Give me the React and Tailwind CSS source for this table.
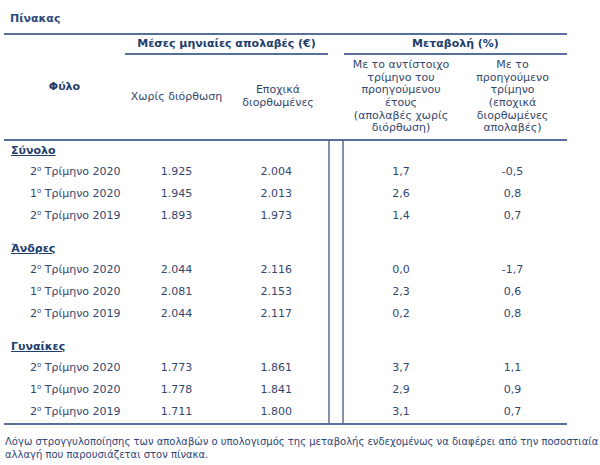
import React from "react";

const sections = [
  {
    name: "Σύνολο",
    rows: [
      ["2", "2020", "1.925", "2.004", "1,7", "-0,5"],
      ["1", "2020", "1.945", "2.013", "2,6", "0,8"],
      ["2", "2019", "1.893", "1.973", "1,4", "0,7"],
    ],
  },
  {
    name: "Άνδρες",
    rows: [
      ["2", "2020", "2.044", "2.116", "0,0", "-1,7"],
      ["1", "2020", "2.081", "2.153", "2,3", "0,6"],
      ["2", "2019", "2.044", "2.117", "0,2", "0,8"],
    ],
  },
  {
    name: "Γυναίκες",
    rows: [
      ["2", "2020", "1.773", "1.861", "3,7", "1,1"],
      ["1", "2020", "1.778", "1.841", "2,9", "0,9"],
      ["2", "2019", "1.711", "1.800", "3,1", "0,7"],
    ],
  },
];

const cols = "grid grid-cols-[121px_103px_100px_16px_114px_109px]";

const Spacer = () => <div className="h-full border-x-2 border-[#8392aa]" />;

const Row = ({ r }) => (
  <div className={`${cols} h-[22px] items-center text-[#34476e]`}>
    <div className="pl-[26px] whitespace-nowrap">
      {r[0]}
      <span className="text-[7px] relative -top-[4px]">ο</span> Τρίμηνο {r[1]}
    </div>
    <div className="text-center">{r[2]}</div>
    <div className="text-right pr-[36px]">{r[3]}</div>
    <Spacer />
    <div className="text-center">{r[4]}</div>
    <div className="text-center">{r[5]}</div>
  </div>
);

export default function App() {
  return (
    <div className="w-[600px] h-[465px] bg-white font-['DejaVu_Sans',Verdana,sans-serif] text-[11px] text-[#2a4170]">
      <div className="h-[33px] flex items-center pl-[10px] pt-[6px] font-bold text-[#2b4a7c]">Πίνακας</div>
      <div className="ml-[4px] w-[563px]">
        <div className="h-[2px] bg-[#56709a]" />
        {/* header */}
        <div className="flex">
          <div className="w-[121px] flex items-center justify-center font-bold text-[#223d6c]">Φύλο</div>
          <div className="flex flex-col">
            <div className="flex">
              <div className="w-[203px] h-[20px] flex items-center justify-center font-bold text-[#223d6c] border-b-2 border-[#56709a]">
                Μέσες μηνιαίες απολαβές (€)
              </div>
              <div className="w-[16px]" />
              <div className="w-[223px] h-[20px] flex items-center justify-center font-bold text-[#223d6c] border-b-2 border-[#56709a]">
                Μεταβολή (%)
              </div>
            </div>
            <div className="flex h-[84px] text-[#34476e] text-center leading-[12.6px]">
              <div className="w-[103px] flex items-center justify-center">Χωρίς διόρθωση</div>
              <div className="w-[100px] flex items-center justify-center">
                Εποχικά
                <br />
                διορθωμένες
              </div>
              <div className="w-[16px]" />
              <div className="w-[114px] flex items-center justify-center whitespace-nowrap">
                Με το αντίστοιχο
                <br />
                τρίμηνο του
                <br />
                προηγούμενου
                <br />
                έτους
                <br />
                (απολαβές χωρίς
                <br />
                διόρθωση)
              </div>
              <div className="w-[109px] flex items-center justify-center whitespace-nowrap">
                Με το
                <br />
                προηγούμενο
                <br />
                τρίμηνο
                <br />
                (εποχικά
                <br />
                διορθωμένες
                <br />
                απολαβές)
              </div>
            </div>
          </div>
        </div>
        <div className="h-[2px] bg-[#56709a]" />
        {/* body */}
        {sections.map((s, i) => (
          <div key={s.name}>
            {i > 0 && (
              <div className={`${cols} h-[12px]`}>
                <div />
                <div />
                <div />
                <Spacer />
              </div>
            )}
            <div className={`${cols} h-[20px] items-center`}>
              <div className="pl-[7px] font-bold underline text-[#223d6c]">{s.name}</div>
              <div />
              <div />
              <Spacer />
            </div>
            {s.rows.map((r, j) => (
              <Row key={j} r={r} />
            ))}
          </div>
        ))}
        <div className="h-[2px] bg-[#56709a]" />
      </div>
      <div className="pl-[5px] pt-[10px] text-[10px] leading-[13px] text-[#2c4577]">
        Λόγω στρογγυλοποίησης των απολαβών ο υπολογισμός της μεταβολής ενδεχομένως να διαφέρει από την ποσοστιαία
        <br />
        αλλαγή που παρουσιάζεται στον πίνακα.
      </div>
    </div>
  );
}
